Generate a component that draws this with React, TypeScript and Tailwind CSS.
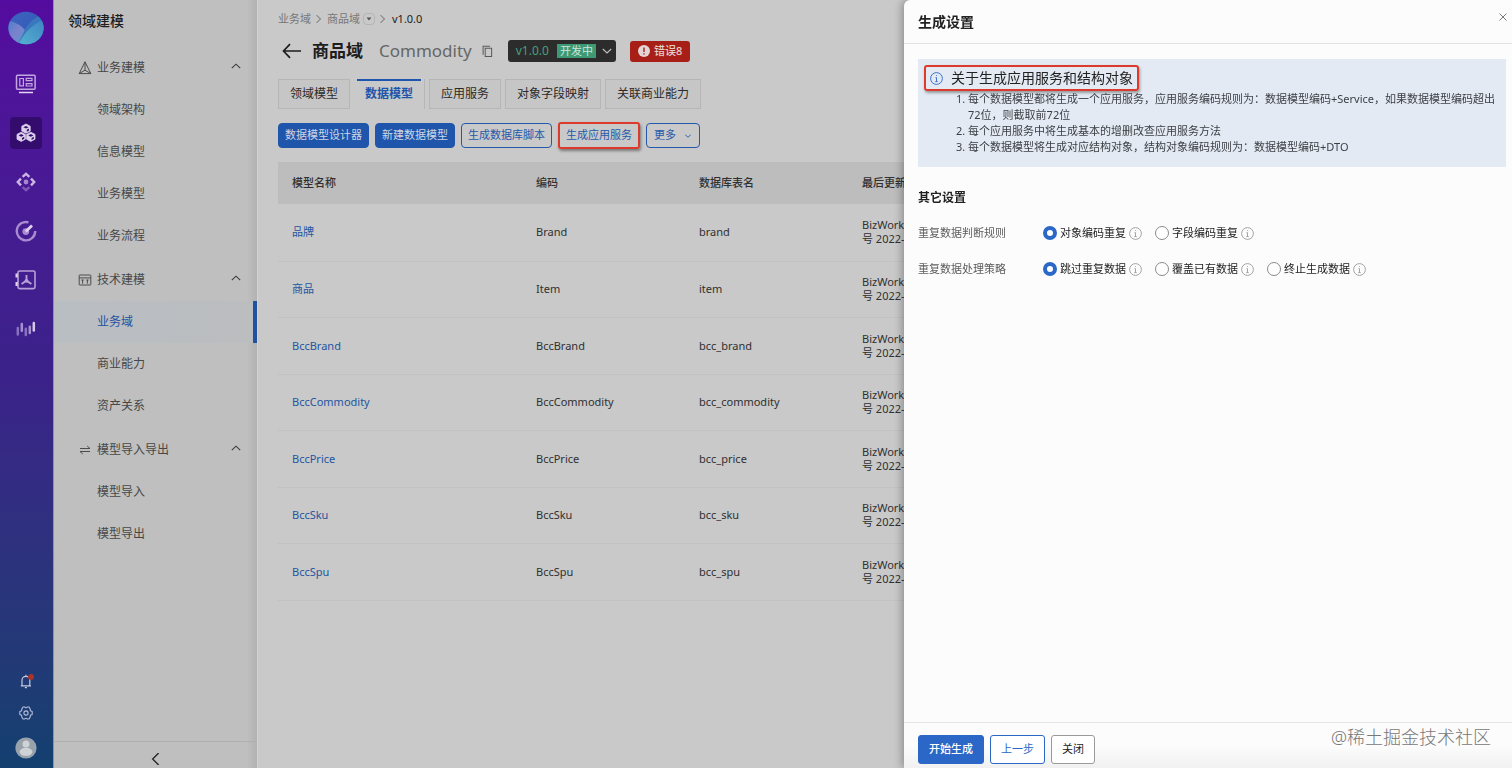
import React from "react";

type Group = { title: string; icon: React.ReactNode; items: string[] };

const PyramidIcon = () => (
  <svg width="14" height="14" viewBox="0 0 14 14" fill="none" stroke="#4c4c4c" strokeWidth="1" strokeLinejoin="round">
    <path d="M7 .8 1.2 12.6h11.6z" />
    <path d="M7 .8v8.4M1.2 12.6 7 9.2l5.8 3.4" />
  </svg>
);

const LayoutIcon = () => (
  <svg width="14" height="14" viewBox="0 0 14 14" fill="none" stroke="#4c4c4c" strokeWidth="1">
    <rect x="1.2" y="2" width="11.6" height="10" rx=".5" />
    <path d="M1.2 4.9h11.6M4.6 7v3.6M9.4 7v3.6M3.4 7h2.4M8.2 7h2.4" />
  </svg>
);

const SwapIcon = () => (
  <svg width="14" height="14" viewBox="0 0 14 14" fill="none" stroke="#4c4c4c" strokeWidth="1">
    <path d="M2 5.5h10L9.2 3M12 8.5H2L4.8 11" />
  </svg>
);

const groups: Group[] = [
  { title: "业务建模", icon: <PyramidIcon />, items: ["领域架构", "信息模型", "业务模型", "业务流程"] },
  { title: "技术建模", icon: <LayoutIcon />, items: ["业务域", "商业能力", "资产关系"] },
  { title: "模型导入导出", icon: <SwapIcon />, items: ["模型导入", "模型导出"] },
];

const rows = [
  ["品牌", "Brand", "brand"],
  ["商品", "Item", "item"],
  ["BccBrand", "BccBrand", "bcc_brand"],
  ["BccCommodity", "BccCommodity", "bcc_commodity"],
  ["BccPrice", "BccPrice", "bcc_price"],
  ["BccSku", "BccSku", "bcc_sku"],
  ["BccSpu", "BccSpu", "bcc_spu"],
];

const tabs = ["领域模型", "数据模型", "应用服务", "对象字段映射", "关联商业能力"];

const Chevron = ({ d, size = 10, color = "#3c3c3c" }: { d: string; size?: number; color?: string }) => (
  <svg width={size} height={size} viewBox="0 0 10 10" fill="none" stroke={color} strokeWidth="1.1">
    <path d={d} />
  </svg>
);

const InfoIcon = ({ color = "#9a9a9a" }: { color?: string }) => (
  <svg width="13" height="13" viewBox="0 0 13 13" fill="none" stroke={color} strokeWidth=".9" className="shrink-0">
    <circle cx="6.5" cy="6.5" r="5.9" />
    <path d="M6.5 5.5v4M5.5 5.7h1M5.3 9.6h2.4" />
    <circle cx="6.5" cy="3.6" r=".5" fill={color} stroke="none" />
  </svg>
);

const Logo = () => (
  <svg width="36" height="36" viewBox="0 0 36 36">
    <defs>
      <linearGradient id="logoBack" x1="0" y1="0" x2="1" y2="1">
        <stop offset="0" stopColor="#3f63c0" />
        <stop offset="1" stopColor="#2f58b4" />
      </linearGradient>
      <linearGradient id="logoLeft" x1="0" y1="0" x2="1" y2="1">
        <stop offset="0" stopColor="#4a80cc" />
        <stop offset=".5" stopColor="#7d82cc" />
        <stop offset="1" stopColor="#4a9ccb" />
      </linearGradient>
      <linearGradient id="logoRight" x1="1" y1="0" x2="0" y2="1">
        <stop offset="0" stopColor="#3f86c4" />
        <stop offset="1" stopColor="#55b2cf" />
      </linearGradient>
      <clipPath id="logoClip">
        <ellipse cx="18" cy="18" rx="17.6" ry="16.2" />
      </clipPath>
    </defs>
    <g clipPath="url(#logoClip)">
      <rect width="36" height="36" fill="url(#logoBack)" />
      <path d="M0 11c6 .5 12 3.5 17 9l-6 15H0z" fill="url(#logoLeft)" />
      <path d="M33 5c-7 3-13 8-16 15l-6 12 4 4 21-4V8z" fill="#3a78bd" />
      <path d="M36 10C27 13 18 20 11 33l6 3h19z" fill="url(#logoRight)" />
    </g>
  </svg>
);

const Cube = ({ x, y }: { x: number; y: number }) => (
  <g transform={`translate(${x} ${y})`}>
    <path d="M0-4.6 4.2-2.4v4.8L0 4.6l-4.2-2.2v-4.8z" fill="#ddd0ea" stroke="#ddd0ea" strokeWidth=".8" strokeLinejoin="round" />
    <path d="M-2.6-1.4 0-.1l2.6-1.3L0-2.7zM.8 1.1v2L3 2V0z" fill="#330c6e" />
  </g>
);

const railIcons: { label: string; icon: React.ReactNode }[] = [
  {
    label: "工作台",
    icon: (
      <svg width="22" height="22" viewBox="0 0 22 22" fill="none" stroke="#c3a5df" strokeWidth="1.5">
        <rect x="1.5" y="2.2" width="18.6" height="14" rx="1" />
        <path d="M4.8 5.5h3.6v7.4H4.8zM11.2 5.3h5.8v2.4h-5.8zM11.2 10.6h5.8v2.4h-5.8z" strokeWidth="1.2" />
        <path d="M4 19.5h14" stroke="#e6d6f2" />
      </svg>
    ),
  },
  {
    label: "领域建模",
    icon: (
      <svg width="22" height="22" viewBox="0 0 22 22">
        <Cube x={11} y={6.6} />
        <Cube x={6.2} y={14.8} />
        <Cube x={15.8} y={14.8} />
      </svg>
    ),
  },
  {
    label: "服务编排",
    icon: (
      <svg width="22" height="22" viewBox="0 0 22 22" fill="none" stroke="#cdb6e4" strokeWidth="2.4">
        <circle cx="11" cy="11" r="2.4" fill="#a987cf" stroke="none" />
        <path d="M7.6 5.8 11 2.9l3.4 2.9" />
        <path d="M6 7.6 2.8 11 6 14.4M16 7.6l3.2 3.4-3.200 3.400" />
        <path d="m7.6 16.200 3.400 2.900 3.400-2.900" stroke="#8159b5" />
      </svg>
    ),
  },
  {
    label: "度量",
    icon: (
      <svg width="22" height="22" viewBox="0 0 22 22" fill="none" stroke="#a98bcf" strokeWidth="2.4">
        <path d="M13.5 2.3A9.200 9.200 0 1 0 20.200 11" />
        <circle cx="10.8" cy="11.6" r="3.4" fill="#a98bcf" stroke="none" />
        <path d="m10.800 11.600 6.200-6" stroke="#e0d2ec" strokeWidth="2.8" />
      </svg>
    ),
  },
  {
    label: "资产",
    icon: (
      <svg width="22" height="22" viewBox="0 0 22 22" fill="none" stroke="#b9a0d8" strokeWidth="1.6">
        <rect x="3" y="2" width="17" height="17.6" rx="1.6" />
        <path d="M11.5 6v5.600L6.600 15M11.500 11.600l4.900 3.400" strokeWidth="1.9" />
        <circle cx="11.5" cy="11.8" r="1.9" fill="#b9a0d8" stroke="none" />
        <path d="M1.600 4.400v4M1.600 13v4" stroke="#e0d2ec" strokeWidth="2.2" />
      </svg>
    ),
  },
  {
    label: "监控",
    icon: (
      <svg width="22" height="22" viewBox="0 0 22 22" fill="none" strokeWidth="2.5" strokeLinecap="round">
        <path d="M2.800 10v6.400M10.800 10.800v6.200" stroke="#8a70c0" />
        <path d="M6.800 6v6.800M14.800 8.800v6.200" stroke="#a890d0" />
        <path d="M18.800 5v7.400" stroke="#d6c8e8" />
      </svg>
    ),
  },
];

const Rail = () => (
  <nav
    aria-label="主导航"
    className="flex w-[54px] shrink-0 flex-col items-center border-r border-[#8f8fb0] bg-gradient-to-b from-[#540b9f] via-[#3a2289] to-[#12406f] pt-2.5 pr-0.5 pb-[9px]"
  >
    <Logo />
    <div className="mt-[22px] flex flex-col gap-[17px]">
      {railIcons.map((r, i) => (
        <button
          key={r.label}
          aria-label={r.label}
          className={`flex size-8 items-center justify-center rounded ${i === 1 ? "bg-[#330c6e]" : ""}`}
        >
          {r.icon}
        </button>
      ))}
    </div>
    <div className="mt-auto flex flex-col items-center gap-[17px]">
      <button aria-label="通知">
        <svg width="16" height="16" viewBox="0 0 16 16" fill="none" stroke="#c4cadd" strokeWidth="1.2">
          <path d="M2.800 12.800h10.200M4 12.800V7.200a3.900 3.900 0 0 1 7.800 0v5.600M7.900 3.300V1.800M6.900 14.600h2" />
          <circle cx="13" cy="4" r="3" fill="#a8332b" stroke="none" />
        </svg>
      </button>
      <button aria-label="设置">
        <svg width="14" height="14" viewBox="0 0 14 14" fill="none" stroke="#b4bdd8" strokeWidth="1.1" strokeLinejoin="round">
          <path d="M4 1h1.600L7 1.900 8.400 1H10l1.300 2.200v1.500l1.900.900v2.800l-1.900.900v1.500L10 13H8.400L7 12.100l-1.400.900H4l-1.300-2.200V9.300L.8 8.400V5.600l1.900-.900V3.200z" />
          <circle cx="7" cy="7" r="2.1" />
        </svg>
      </button>
      <button aria-label="账户">
        <svg width="22" height="22" viewBox="0 0 22 22">
          <circle cx="11" cy="11" r="10.6" fill="#98a2ac" />
          <circle cx="11" cy="7" r="3.5" fill="#cfd3d6" />
          <ellipse cx="11" cy="14.8" rx="6.4" ry="4" fill="#cfd3d6" />
        </svg>
      </button>
    </div>
  </nav>
);

const Sidebar = () => (
  <aside className="flex w-[203px] shrink-0 flex-col bg-gradient-to-r from-[#bfbfbf] from-95% to-[#b2b2b2] text-xs text-[#474747]">
    <h2 className="px-3.5 pt-3 pb-[17px] text-sm leading-[18px] font-medium text-[#1e1e1e]">领域建模</h2>
    <div className="flex flex-1 flex-col gap-0.5">
      {groups.map((g) => (
        <div key={g.title}>
          <button className="flex h-[42px] w-full items-center pr-4 pl-6">
            {g.icon}
            <span className="ml-[5px] flex-1 text-left">{g.title}</span>
            <Chevron d="M.8 5.200 5 1.200l4.200 4" />
          </button>
          {g.items.map((item) => (
            <a
              key={item}
              href="#"
              className={`flex h-[42px] items-center pl-[43px] ${
                item === "业务域"
                  ? "border-r-4 border-[#1f52a0] bg-gradient-to-r from-[#b9bec3] to-[#bbbdbf] text-[#1f52a0]"
                  : ""
              }`}
            >
              {item}
            </a>
          ))}
        </div>
      ))}
    </div>
    <button aria-label="收起" className="flex h-[27px] items-end justify-center border-t border-[#afafaf] pb-[3px]">
      <Chevron d="M7.200 0 2.200 5l5 5" size={12} color="#222" />
    </button>
  </aside>
);

const Main = () => (
  <main className="min-w-0 flex-1 overflow-hidden border-l border-[#d3d3d3] bg-[#c9c9c9] pt-2.5 pl-5">
    <nav aria-label="面包屑" className="flex h-[18px] items-center text-[11px] text-[#777]">
      <a href="#">业务域</a>
      <span className="mx-[3px]">
        <Chevron d="M2.500 1.200 6.500 5l-4 3.800" color="#888" />
      </span>
      <a href="#">商品域</a>
      <button aria-label="切换域" className="mx-[3px] flex size-3 items-center justify-center rounded-sm border border-[#b4b4b4]">
        <svg width="6" height="4" viewBox="0 0 6 4">
          <path d="M.5.5h5L3 3.500z" fill="#555" />
        </svg>
      </button>
      <span className="mr-1">
        <Chevron d="M2.500 1.200 6.500 5l-4 3.800" color="#888" />
      </span>
      <span className="text-[#1c1c1c]">v1.0.0</span>
    </nav>

    <div className="mt-2.5 flex h-[26px] items-center">
      <button aria-label="返回" className="mr-2.5 ml-1">
        <svg width="20" height="16" viewBox="0 0 20 16" fill="none" stroke="#1d1d1d" strokeWidth="1.7">
          <path d="M19 8H1.500M8 1.200 1.500 8 8 14.800" />
        </svg>
      </button>
      <h1 className="text-[17px] font-bold text-[#1d1d1d]">商品域</h1>
      <span className="ml-4 text-[17px] text-[#666]">Commodity</span>
      <button aria-label="复制" className="ml-2.5">
        <svg width="11" height="13" viewBox="0 0 12 14" fill="none" stroke="#5a5a5a" strokeWidth="1.1">
          <path d="M3.500 3.500h7v9h-7zM1.200 10.500V1.200h7.600" />
        </svg>
      </button>
      <button className="ml-[15px] flex h-[22px] items-center rounded-[3px] bg-[#2c2c2c] pr-1 pl-2 text-xs text-[#45a07c]">
        v1.0.0
        <span className="ml-2 bg-[#3d9a74] px-[3px] text-[11px] leading-[14px] text-[#cfe3da]">开发中</span>
        <span className="ml-1.5">
          <Chevron d="M.8 3 5 7l4.200-4" color="#c0c0c0" />
        </span>
      </button>
      <button className="ml-3.5 flex h-[21px] items-center gap-1 rounded-[3px] bg-[#a81f18] px-2 text-[11px] font-medium text-[#e3cdcb]">
        <svg width="12" height="12" viewBox="0 0 12 12">
          <circle cx="6" cy="6" r="6" fill="#e3d5d3" />
          <path d="M6 2.500v4.500M6 8.300v1.300" stroke="#a81f18" strokeWidth="1.4" />
        </svg>
        错误8
      </button>
    </div>

    <div role="tablist" className="mt-[15px] flex h-[30px] gap-1 text-xs text-[#2a2a2a]">
      {tabs.map((t, i) =>
        i === 1 ? (
          <button key={t} role="tab" aria-selected="true" className="relative border-r border-[#b6b6b6] px-[11px] font-bold text-[#1f55ab]">
            <span className="absolute inset-x-[3px] top-0 h-0.5 bg-[#1f55ab]" />
            {t}
          </button>
        ) : (
          <button key={t} role="tab" aria-selected="false" className="border border-[#b6b6b6] bg-[#c6c6c6] px-[11px]">
            {t}
          </button>
        ),
      )}
    </div>

    <div className="mt-[13px] flex h-[27px] items-center gap-1.5 text-[11px] text-[#2559ab]">
      <button className="h-[25px] rounded-sm border border-[#1f55ab] bg-[#1f55ab] px-1.5 text-[#cdd7e6]">数据模型设计器</button>
      <button className="h-[25px] rounded-sm border border-[#1f55ab] bg-[#1f55ab] px-1.5 text-[#cdd7e6]">新建数据模型</button>
      <button className="h-[25px] rounded-sm border border-[#2559ab] px-1.5">生成数据库脚本</button>
      <button className="h-[27px] rounded-[3px] border-2 border-[#dc3a2c] px-1.5 shadow-[1px_2px_3px_rgba(0,0,0,0.4)]">生成应用服务</button>
      <button className="flex h-[25px] items-center gap-2 rounded-sm border border-[#2559ab] px-[7px]">
        更多
        <Chevron d="M1.500 3.500 5 6.500l3.500-3" size={8} color="#2559ab" />
      </button>
    </div>

    <table className="mt-[13px] w-full table-fixed border-collapse text-left text-[11px] leading-[14px] text-[#303030]">
      <colgroup>
        <col className="w-[244px]" />
        <col className="w-[163px]" />
        <col className="w-[163px]" />
        <col />
      </colgroup>
      <thead>
        <tr className="h-[42px] bg-[#bdbdbd]">
          <th className="pl-3.5 font-medium">模型名称</th>
          <th className="pl-3.5 font-medium">编码</th>
          <th className="pl-3.5 font-medium">数据库表名</th>
          <th className="pl-3.5 font-medium">最后更新</th>
        </tr>
      </thead>
      <tbody>
        {rows.map(([name, code, tableName]) => (
          <tr key={code} className="border-b border-[#c2c2c2] odd:h-[57px] even:h-14">
            <td className="pl-3.5">
              <a href="#" className="text-[#2455a0]">
                {name}
              </a>
            </td>
            <td className="pl-3.5">{code}</td>
            <td className="pl-3.5">{tableName}</td>
            <td className="pl-3.5">
              BizWorks
              <br />号 2022-
            </td>
          </tr>
        ))}
      </tbody>
    </table>
  </main>
);

const RadioRow = ({ label, name, options }: { label: string; name: string; options: string[] }) => (
  <fieldset className="flex h-9 items-center">
    <legend className="float-left w-[125px] text-[#5c5c5c]">{label}</legend>
    <div className="flex gap-[13px]">
      {options.map((o, i) => (
        <label key={o} className="flex items-center gap-[3px] whitespace-nowrap text-[#1d1d1d]">
          <input
            type="radio"
            name={name}
            defaultChecked={i === 0}
            className="size-3.5 appearance-none rounded-full border border-[#8a8a8a] bg-white checked:border-4 checked:border-[#2a67c6]"
          />
          {o}
          <InfoIcon />
        </label>
      ))}
    </div>
  </fieldset>
);

const Drawer = () => (
  <section
    role="dialog"
    aria-label="生成设置"
    className="fixed inset-y-0 right-0 flex w-[608px] max-w-full flex-col rounded-tl-md bg-[#fcfcfc] text-[11px] shadow-[-2px_0_8px_rgba(0,0,0,0.3)]"
  >
    <header className="flex h-11 items-center justify-between border-b border-[#e3e3e3] pr-1 pl-3.5">
      <h2 className="text-sm font-bold text-[#222]">生成设置</h2>
      <button aria-label="关闭窗口" className="mb-2.5">
        <svg width="10" height="10" viewBox="0 0 10 10" stroke="#777" strokeWidth="1">
          <path d="m1.500 1.500 7 7M8.500 1.500l-7 7" />
        </svg>
      </button>
    </header>

    <div className="flex-1 pt-[15px] pr-1.5 pl-3.5">
      <div className="bg-[#e3eaf3] px-1.5 pt-1.5 pb-3">
        <h3 className="inline-flex h-[26px] items-center gap-2 rounded-[3px] border-2 border-[#dc3a2c] px-1 text-sm text-[#222] shadow-[1px_2px_3px_rgba(0,0,0,0.35)]">
          <InfoIcon color="#2a67c6" />
          关于生成应用服务和结构对象
        </h3>
        <ol className="list-decimal pr-1 pl-11 leading-4 text-[#3c3f44]">
          <li>每个数据模型都将生成一个应用服务，应用服务编码规则为：数据模型编码+Service，如果数据模型编码超出72位，则截取前72位</li>
          <li>每个应用服务中将生成基本的增删改查应用服务方法</li>
          <li>每个数据模型将生成对应结构对象，结构对象编码规则为：数据模型编码+DTO</li>
        </ol>
      </div>
      <h3 className="mt-[22px] mb-2 text-xs leading-[18px] font-bold text-[#222]">其它设置</h3>
      <RadioRow label="重复数据判断规则" name="rule" options={["对象编码重复", "字段编码重复"]} />
      <RadioRow label="重复数据处理策略" name="strategy" options={["跳过重复数据", "覆盖已有数据", "终止生成数据"]} />
    </div>

    <footer className="flex h-[46px] items-start justify-between border-t border-[#e6e6e6] bg-gradient-to-b from-[#fcfcfc] from-50% to-[#f1f1f1] pr-[21px] pl-3.5">
      <div className="flex gap-1.5 pt-3">
        <button className="h-[29px] rounded-[3px] border border-[#2a67c6] bg-[#2a67c6] px-2.5 font-medium text-white">开始生成</button>
        <button className="h-[29px] rounded-[3px] border border-[#2a67c6] bg-white px-2.5 text-[#2a67c6]">上一步</button>
        <button className="h-[29px] rounded-[3px] border border-[#9a9a9a] bg-white px-2.5 text-[#222]">关闭</button>
      </div>
      <span className="text-lg leading-7 font-light text-[#777]">@稀土掘金技术社区</span>
    </footer>
  </section>
);

export default function App() {
  return (
    <div className="flex h-screen overflow-hidden font-['Noto_Sans','Noto_Sans_CJK_SC',sans-serif]">
      <Rail />
      <Sidebar />
      <Main />
      <Drawer />
    </div>
  );
}
